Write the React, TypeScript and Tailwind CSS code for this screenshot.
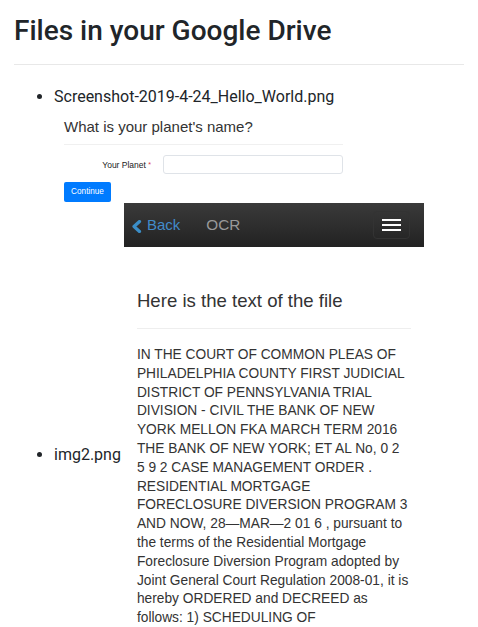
const ocrLines = [
  'IN THE COURT OF COMMON PLEAS OF',
  'PHILADELPHIA COUNTY FIRST JUDICIAL',
  'DISTRICT OF PENNSYLVANIA TRIAL',
  'DIVISION - CIVIL THE BANK OF NEW',
  'YORK MELLON FKA MARCH TERM 2016',
  'THE BANK OF NEW YORK; ET AL No, 0 2',
  '5 9 2 CASE MANAGEMENT ORDER .',
  'RESIDENTIAL MORTGAGE',
  'FORECLOSURE DIVERSION PROGRAM 3',
  'AND NOW, 28\u2014MAR\u20142 01 6 , pursuant to',
  'the terms of the Residential Mortgage',
  'Foreclosure Diversion Program adopted by',
  'Joint General Court Regulation 2008-01, it is',
  'hereby ORDERED and DECREED as',
  'follows: 1) SCHEDULING OF',
]

// first "image": the planet form screenshot
function PlanetShot() {
  return (
    <div className="w-[300px] h-[94px] bg-white pl-[10px] pr-[11px] pt-[9px] font-['Liberation_Sans',Arial,sans-serif] text-[#333]">
      <div className="text-[15px] leading-[17px]">What is your planet's name?</div>
      <div className="mt-[9px] h-px bg-[#f0f0f0]" />
      <div className="mt-[10px] flex items-center h-[19px]">
        <div className="w-[99px] pr-[12px] text-right text-[8.5px] text-[#222]">
          Your Planet <span className="text-[#dc3545] text-[7px] align-top">*</span>
        </div>
        <div className="flex-1 h-[19px] rounded-[3px] border border-[#dfe3e8] bg-white" />
      </div>
      <div className="mt-[8px] w-[47px] h-[19.5px] rounded-[2px] bg-[#007bff] text-white text-[8.2px] flex items-center justify-center">
        Continue
      </div>
    </div>
  )
}

// second "image": the OCR result screenshot
function OcrShot() {
  return (
    <div className="inline-block align-middle ml-[3px] w-[300px] h-[505px] overflow-hidden bg-white font-['Liberation_Sans',Arial,sans-serif]">
      <div className="h-[44px] bg-[linear-gradient(#3a3a3a,#222)] flex items-center pl-[7px] pr-[14px]">
        <svg width="11" height="13" viewBox="0 0 11 13" className="mt-[2px]">
          <path d="M8.5 1.5 L3 6.5 L8.5 11.5" fill="none" stroke="#3b8ec8" strokeWidth="3.2" strokeLinejoin="round" strokeLinecap="round" />
        </svg>
        <span className="ml-[5px] text-[15px] text-[#428bca]">Back</span>
        <span className="ml-[26px] text-[15.3px] text-[#999]">OCR</span>
        <div className="ml-auto w-[37px] h-[28px] rounded-[4px] border border-[#333] flex flex-col items-center justify-center gap-[3.4px]">
          <div className="w-[19px] h-[2px] bg-white" />
          <div className="w-[19px] h-[2px] bg-white" />
          <div className="w-[19px] h-[2px] bg-white" />
        </div>
      </div>
      <div className="pl-[13px] pr-[13px] text-[#333]">
        <div className="mt-[44px] text-[18.6px] leading-[20px]">Here is the text of the file</div>
        <div className="mt-[17px] h-px bg-[#eee]" />
        <div className="mt-[17px] text-[13.75px] leading-[18.8px]">
          {ocrLines.map(l => (
            <div key={l} className="whitespace-nowrap">{l}</div>
          ))}
        </div>
      </div>
    </div>
  )
}

export default function App() {
  return (
    <div className="min-h-screen bg-white px-[14px] pt-[14px] font-['Roboto',sans-serif] text-[#212529]">
      <h2 className="text-[28px] leading-[33px] font-medium">Files in your Google Drive</h2>
      <hr className="mt-[17px] border-0 h-px bg-[#e8e8e8]" />
      <ul className="mt-[20px] pl-[40px] list-disc text-[16px] leading-[24px]">
        <li>
          Screenshot-2019-4-24_Hello_World.png
          <PlanetShot />
        </li>
        <li>
          img2.png<OcrShot />
        </li>
      </ul>
    </div>
  )
}
